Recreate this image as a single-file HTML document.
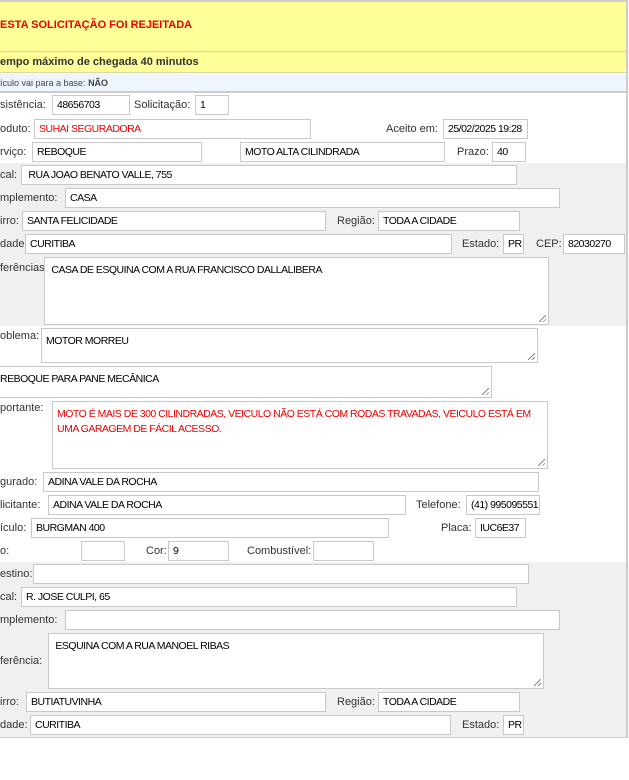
<!DOCTYPE html>
<html><head><meta charset="utf-8"><style>
*{box-sizing:border-box;margin:0;padding:0}
body{width:629px;height:780px;background:#fff;font-family:"Liberation Sans",Tahoma,sans-serif;font-size:11px;color:#222;position:relative;overflow:hidden}
.a{position:absolute}
.l{position:absolute;color:#333;white-space:nowrap;line-height:20px}
.i{position:absolute;border:1px solid #c8c8c8;background:#fff;height:20px;line-height:19px;padding-left:4px;white-space:nowrap;overflow:hidden;color:#000;font-size:10.5px;letter-spacing:-0.5px}
.t{position:absolute;border:1px solid #c8c8c8;background:#fff;padding:5px 4px;line-height:15px;color:#000;font-size:10.5px;letter-spacing:-0.5px}
.t:after{content:"";position:absolute;right:2px;bottom:2px;width:7px;height:7px;background:linear-gradient(135deg,transparent 45%,#888 45%,#888 55%,transparent 55%,transparent 75%,#888 75%,#888 85%,transparent 85%)}
.r{color:#e00}
</style></head><body>
<div class="a" style="left:0;top:0;width:628px;height:738px;border-top:2px solid #ccc;border-right:2px solid #ccc;border-bottom:1px solid #ccc"></div>
<div class="a" style="left:0;top:2px;width:626px;height:50px;background:#ffff99;border-bottom:1px solid #d8d8a0"></div>
<div class="a" style="left:0;top:19px;font-weight:bold;color:#e00;font-size:11px">ESTA SOLICITAÇÃO FOI REJEITADA</div>
<div class="a" style="left:0;top:52px;width:626px;height:21px;background:#ffff99;border-bottom:1px solid #d8d8a0"></div>
<div class="a" style="left:0;top:56px;font-weight:bold;color:#333">empo máximo de chegada 40 minutos</div>
<div class="a" style="left:0;top:74px;width:626px;height:19px;background:#eef5fd;border-bottom:2px solid #ccc"></div>
<div class="a" style="left:0;top:78px;font-size:9px;color:#444">ículo vai para a base: <b>NÃO</b></div>

<div class="a" style="left:0;top:163px;width:626px;height:163px;background:#f0f0f0"></div>
<div class="a" style="left:0;top:562px;width:626px;height:175px;background:#f0f0f0"></div>

<div class="l" style="left:0;top:95px">sistência:</div><div class="i" style="left:52px;top:95px;width:78px">48656703</div>
<div class="l" style="left:134px;top:95px">Solicitação:</div><div class="i" style="left:195px;top:95px;width:34px">1</div>
<div class="l" style="left:0;top:119px">oduto:</div><div class="i r" style="left:34px;top:119px;width:277px">SUHAI SEGURADORA</div>
<div class="l" style="left:386px;top:119px">Aceito em:</div><div class="i" style="left:443px;top:119px;width:85px">25/02/2025 19:28</div>
<div class="l" style="left:0;top:142px">rviço:</div><div class="i" style="left:32px;top:142px;width:170px">REBOQUE</div>
<div class="i" style="left:240px;top:142px;width:205px">MOTO ALTA CILINDRADA</div>
<div class="l" style="left:457px;top:142px">Prazo:</div><div class="i" style="left:492px;top:142px;width:34px">40</div>

<div class="l" style="left:0;top:165px">cal:</div><div class="i" style="left:21px;top:165px;width:496px">&nbsp;RUA JOAO BENATO VALLE, 755</div>
<div class="l" style="left:0;top:188px">mplemento:</div><div class="i" style="left:65px;top:188px;width:495px">CASA</div>
<div class="l" style="left:0;top:211px">irro:</div><div class="i" style="left:22px;top:211px;width:304px">SANTA FELICIDADE</div>
<div class="l" style="left:337px;top:211px">Região:</div><div class="i" style="left:378px;top:211px;width:142px">TODA A CIDADE</div>
<div class="l" style="left:0;top:234px">dade:</div><div class="i" style="left:25px;top:234px;width:427px">CURITIBA</div>
<div class="l" style="left:462px;top:234px">Estado:</div><div class="i" style="left:503px;top:234px;width:21px">PR</div>
<div class="l" style="left:536px;top:234px">CEP:</div><div class="i" style="left:563px;top:234px;width:62px">82030270</div>
<div class="l" style="left:0;top:258px">ferências:</div><div class="t" style="left:44px;top:257px;width:505px;height:68px">&nbsp;CASA DE ESQUINA COM A RUA FRANCISCO DALLALIBERA</div>

<div class="l" style="left:0;top:326px">oblema:</div><div class="t" style="left:41px;top:328px;width:497px;height:35px">MOTOR MORREU</div>
<div class="t" style="left:-5px;top:366px;width:497px;height:32px">REBOQUE PARA PANE MECÂNICA</div>
<div class="l" style="left:0;top:398px">portante:</div><div class="t r" style="left:52px;top:401px;width:496px;height:68px">MOTO É MAIS DE 300 CILINDRADAS, VEICULO NÃO ESTÁ COM RODAS TRAVADAS, VEICULO ESTÁ EM UMA GARAGEM DE FÁCIL ACESSO.</div>
<div class="l" style="left:0;top:472px">gurado:</div><div class="i" style="left:43px;top:472px;width:496px">ADINA VALE DA ROCHA</div>
<div class="l" style="left:0;top:495px">licitante:</div><div class="i" style="left:48px;top:495px;width:358px">ADINA VALE DA ROCHA</div>
<div class="l" style="left:416px;top:495px">Telefone:</div><div class="i" style="left:466px;top:495px;width:74px">(41) 995095551</div>
<div class="l" style="left:0;top:518px">ículo:</div><div class="i" style="left:31px;top:518px;width:358px">BURGMAN 400</div>
<div class="l" style="left:441px;top:518px">Placa:</div><div class="i" style="left:475px;top:518px;width:51px">IUC6E37</div>
<div class="l" style="left:0;top:541px">o:</div><div class="i" style="left:81px;top:541px;width:44px"></div>
<div class="l" style="left:146px;top:541px">Cor:</div><div class="i" style="left:168px;top:541px;width:61px">9</div>
<div class="l" style="left:247px;top:541px">Combustível:</div><div class="i" style="left:313px;top:541px;width:61px"></div>

<div class="l" style="left:0;top:564px">estino:</div><div class="i" style="left:33px;top:564px;width:496px"></div>
<div class="l" style="left:0;top:587px">cal:</div><div class="i" style="left:21px;top:587px;width:496px">R. JOSE CULPI, 65</div>
<div class="l" style="left:0;top:610px">mplemento:</div><div class="i" style="left:65px;top:610px;width:495px"></div>
<div class="l" style="left:0;top:651px">ferência:</div><div class="t" style="left:48px;top:633px;width:496px;height:56px">&nbsp;ESQUINA COM A RUA MANOEL RIBAS</div>
<div class="l" style="left:0;top:692px">irro:</div><div class="i" style="left:26px;top:692px;width:300px">BUTIATUVINHA</div>
<div class="l" style="left:337px;top:692px">Região:</div><div class="i" style="left:378px;top:692px;width:142px">TODA A CIDADE</div>
<div class="l" style="left:0;top:715px">dade:</div><div class="i" style="left:30px;top:715px;width:421px">CURITIBA</div>
<div class="l" style="left:462px;top:715px">Estado:</div><div class="i" style="left:503px;top:715px;width:21px">PR</div>
</body></html>
